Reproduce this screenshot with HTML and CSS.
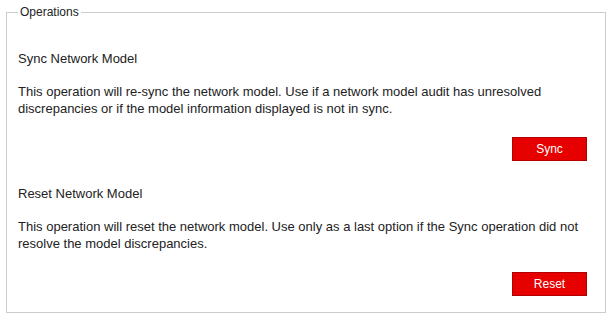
FILE: index.html
```html
<!DOCTYPE html>
<html>
  <head>
    <title>Operations</title>
    <link rel="stylesheet" href="styles.css">
  </head>
  <body>
    <fieldset class="ops">
      <legend>Operations</legend>

      <div class="op">
        <div class="op-title">Sync Network Model</div>
        <p class="op-desc">This operation will re-sync the network model. Use if a network model audit has unresolved discrepancies or if the model information displayed is not in sync.</p>
        <div class="op-actions">
          <button class="btn-red" type="button">Sync</button>
        </div>
      </div>

      <div class="op">
        <div class="op-title">Reset Network Model</div>
        <p class="op-desc">This operation will reset the network model. Use only as a last option if the Sync operation did not resolve the model discrepancies.</p>
        <div class="op-actions">
          <button class="btn-red" type="button">Reset</button>
        </div>
      </div>
    </fieldset>
  </body>
</html>
```

FILE: styles.css
```css
body {
  margin: 0;
  padding: 5px 0 0 6px;
  font-family: "Liberation Sans", Arial, sans-serif;
  color: #222;
  background-color: #fff;
}
fieldset.ops {
  box-sizing: border-box;
  width: 600px;
  margin: 0;
  padding: 32px 18px 16px 11px;
  border: 1px solid #ccc;
}
fieldset.ops legend {
  font-size: 12px;
  line-height: 14px;
  padding: 0 2px;
}
.op + .op {
  margin-top: 25px;
}
.op-title {
  font-size: 13px;
  line-height: 16px;
}
.op-desc {
  font-size: 13px;
  line-height: 17px;
  margin: 16px 0 20px 0;
}
.op-actions {
  display: flex;
  justify-content: flex-end;
}
.btn-red {
  width: 75px;
  height: 24px;
  padding: 0;
  font-family: "Liberation Sans", Arial, sans-serif;
  font-size: 12px;
  color: #fff;
  background-color: #e60000;
  border: 1px solid #b00000;
  cursor: pointer;
}
.btn-red:hover {
  background-color: #cc0000;
}
```
